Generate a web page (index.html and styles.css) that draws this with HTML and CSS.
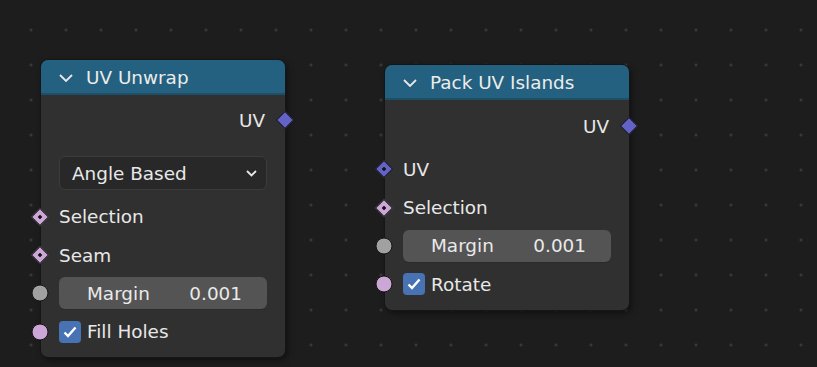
FILE: index.html
```html
<!DOCTYPE html>
<html lang="en">
<head>
    <meta charset="UTF-8">
    <title>Node Editor</title>
    <link rel="stylesheet" href="styles.css">
</head>
<body>
    <div class="canvas">
        <div class="node node-unwrap">
            <div class="node-header">
                <svg class="chevron" width="14" height="8" viewBox="0 0 14 8"><path d="M1 1 L7 7 L13 1" fill="none" stroke="#e8e8e8" stroke-width="1.8"/></svg>
                <span>UV Unwrap</span>
            </div>
            <div class="node-body">
                <div class="row output">
                    <span>UV</span>
                    <i class="socket out vector"></i>
                </div>
                <div class="row dropdown-row">
                    <div class="dropdown">
                        <span>Angle Based</span>
                        <svg width="11" height="7" viewBox="0 0 11 7"><path d="M1 1 L5.5 5.5 L10 1" fill="none" stroke="#e8e8e8" stroke-width="1.8"/></svg>
                    </div>
                </div>
                <div class="row gap-sm">
                    <i class="socket in bool-field"></i>
                    <span>Selection</span>
                </div>
                <div class="row">
                    <i class="socket in bool-field"></i>
                    <span>Seam</span>
                </div>
                <div class="row">
                    <i class="socket in float"></i>
                    <div class="field"><span>Margin</span><span>0.001</span></div>
                </div>
                <div class="row">
                    <i class="socket in bool"></i>
                    <label class="check"><span class="box"><svg width="14" height="12" viewBox="0 0 14 12"><path d="M1.5 6.5 L5 10 L12.5 1.5" fill="none" stroke="#fff" stroke-width="2.4"/></svg></span>Fill Holes</label>
                </div>
            </div>
        </div>

        <div class="node node-pack">
            <div class="node-header">
                <svg class="chevron" width="14" height="8" viewBox="0 0 14 8"><path d="M1 1 L7 7 L13 1" fill="none" stroke="#e8e8e8" stroke-width="1.8"/></svg>
                <span>Pack UV Islands</span>
            </div>
            <div class="node-body">
                <div class="row output">
                    <span>UV</span>
                    <i class="socket out vector"></i>
                </div>
                <div class="row gap-md">
                    <i class="socket in vector-field"></i>
                    <span>UV</span>
                </div>
                <div class="row">
                    <i class="socket in bool-field"></i>
                    <span>Selection</span>
                </div>
                <div class="row">
                    <i class="socket in float"></i>
                    <div class="field"><span>Margin</span><span>0.001</span></div>
                </div>
                <div class="row">
                    <i class="socket in bool"></i>
                    <label class="check"><span class="box"><svg width="14" height="12" viewBox="0 0 14 12"><path d="M1.5 6.5 L5 10 L12.5 1.5" fill="none" stroke="#fff" stroke-width="2.4"/></svg></span>Rotate</label>
                </div>
            </div>
        </div>
    </div>
</body>
</html>
```

FILE: styles.css
```css
body {
    margin: 0;
    background: #1d1d1d;
    font-family: 'DejaVu Sans', sans-serif;
    color: #e8e8e8;
    overflow: hidden;
}
.canvas {
    position: relative;
    width: 817px;
    height: 367px;
    background-image: radial-gradient(circle, #3c3c3c 1px, transparent 1.6px);
    background-size: 35px 35px;
    background-position: 13.5px 12.5px;
}
.node {
    position: absolute;
    width: 244px;
    background: #303030;
    border-radius: 7px;
    box-shadow: 0 0 0 1px #161616, 2px 3px 6px rgba(0, 0, 0, 0.5);
}
.node-unwrap {
    left: 41px;
    top: 60px;
}
.node-pack {
    left: 385px;
    top: 65px;
}
.node-header {
    height: 35px;
    background: #24607f;
    border-radius: 7px 7px 0 0;
    display: flex;
    align-items: center;
    gap: 13px;
    padding-left: 18px;
    font-size: 18.4px;
    color: #ececec;
    box-shadow: inset 0 -2px 0 #1d4f69;
}
.node-body {
    padding: 6px 0 6px;
    display: flex;
    flex-direction: column;
    font-size: 18.4px;
}
.node-pack .node-body {
    padding-top: 7px;
}
.row {
    position: relative;
    height: 38.4px;
    display: flex;
    align-items: center;
    padding: 0 18px;
}
.row.output {
    justify-content: flex-end;
    padding-right: 20px;
    height: 38px;
}
.gap-sm {
    margin-top: 5.5px;
}
.gap-md {
    margin-top: 5px;
}
.dropdown-row {
    margin-top: 15px;
    height: 38px;
}
.dropdown {
    flex: 1;
    height: 34px;
    box-sizing: border-box;
    background: #282828;
    border: 1px solid #3c3c3c;
    border-radius: 6px;
    display: flex;
    align-items: center;
    justify-content: space-between;
    padding: 0 9px 0 12px;
}
.field {
    flex: 1;
    height: 32px;
    background: #545454;
    border-radius: 6px;
    display: flex;
    align-items: center;
    justify-content: space-between;
    padding: 0 25px 0 28px;
    color: #eaeaea;
    box-shadow: 0 1px 0 #2a2a2a;
}
.check {
    display: flex;
    align-items: center;
    gap: 6px;
}
.box {
    width: 22px;
    height: 22px;
    background: #4772b3;
    border-radius: 4px;
    display: flex;
    align-items: center;
    justify-content: center;
}
.socket {
    position: absolute;
    top: 50%;
    display: block;
    box-sizing: border-box;
}
.socket.in {
    left: -1px;
}
.socket.out {
    right: 0;
}
.vector, .vector-field, .bool-field {
    width: 13px;
    height: 13px;
    border: 1px solid #151515;
    transform: translate(-50%, -50%) rotate(45deg);
}
.socket.out.vector {
    transform: translate(50%, -50%) rotate(45deg);
}
.vector {
    background: #6363c7;
}
.vector-field {
    background: #6363c7 radial-gradient(circle, #151515 1.5px, transparent 2px);
}
.bool-field {
    background: #cca6d6 radial-gradient(circle, #151515 1.5px, transparent 2px);
}
.float, .bool {
    width: 17px;
    height: 17px;
    border-radius: 50%;
    border: 1px solid #151515;
    transform: translate(-50%, -50%);
}
.float {
    background: #a1a1a1;
}
.bool {
    background: #cca6d6;
}
```
